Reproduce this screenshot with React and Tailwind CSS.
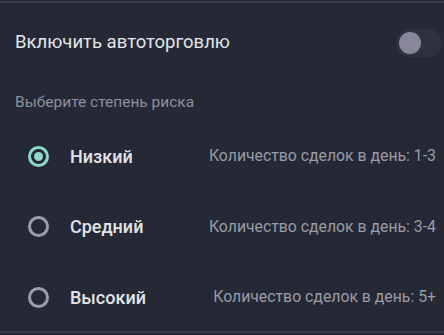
import React, { useState } from "react";

const levels = [
  { id: "low", label: "Низкий", info: "Количество сделок в день: 1-3" },
  { id: "mid", label: "Средний", info: "Количество сделок в день: 3-4" },
  { id: "high", label: "Высокий", info: "Количество сделок в день: 5+" },
];

export default function App() {
  const [auto, setAuto] = useState(false);
  const [risk, setRisk] = useState("low");

  return (
    <div
      className="w-[444px] h-[335px] bg-[#242935] overflow-hidden"
      style={{ fontFamily: "Roboto, 'Noto Sans', sans-serif" }}
    >
      <div className="h-[335px] pt-px">
        <div className="border-t-2 border-b-2 border-[#363b47] h-[332px]">
          {/* Auto trading toggle */}
          <div className="flex items-center justify-between pl-[15px] pr-[2px] pt-[24px] h-[56px]">
            <span className="text-[18.5px] text-[#e4e5ea] font-normal">Включить автоторговлю</span>
            <button
              onClick={() => setAuto(!auto)}
              className="relative w-[46px] h-[28px] rounded-full bg-[#2d3240]"
            >
              <span className="absolute left-[3px] top-[3px] w-[22px] h-[22px] rounded-full bg-[#878799]" />
            </button>
          </div>

          <div className="pl-[15px] pt-[33px] text-[15.5px] leading-[20px] text-[#8d909b]">Выберите степень риска</div>

          {/* Risk options */}
          <div className="flex flex-col pt-[9px]">
            {levels.map((l) => {
              const active = risk === l.id;
              return (
                <div
                  key={l.id}
                  onClick={() => setRisk(l.id)}
                  className="flex items-center h-[70.5px] pl-[28px] pr-[8px] cursor-pointer"
                >
                  <span
                    className={`w-[21px] h-[21px] rounded-full border-[3px] flex items-center justify-center ${
                      active ? "border-[#8ed8c6]" : "border-[#9c9caa]"
                    }`}
                  >
                    {active && <span className="w-[9px] h-[9px] rounded-full bg-[#8ed8c6]" />}
                  </span>
                  <span className="ml-[21px] text-[18px] font-medium text-[#e2e3e8]">{l.label}</span>
                  <span className="ml-auto text-[15.8px] text-[#9a9ca6]">{l.info}</span>
                </div>
              );
            })}
          </div>
        </div>
      </div>
    </div>
  );
}
